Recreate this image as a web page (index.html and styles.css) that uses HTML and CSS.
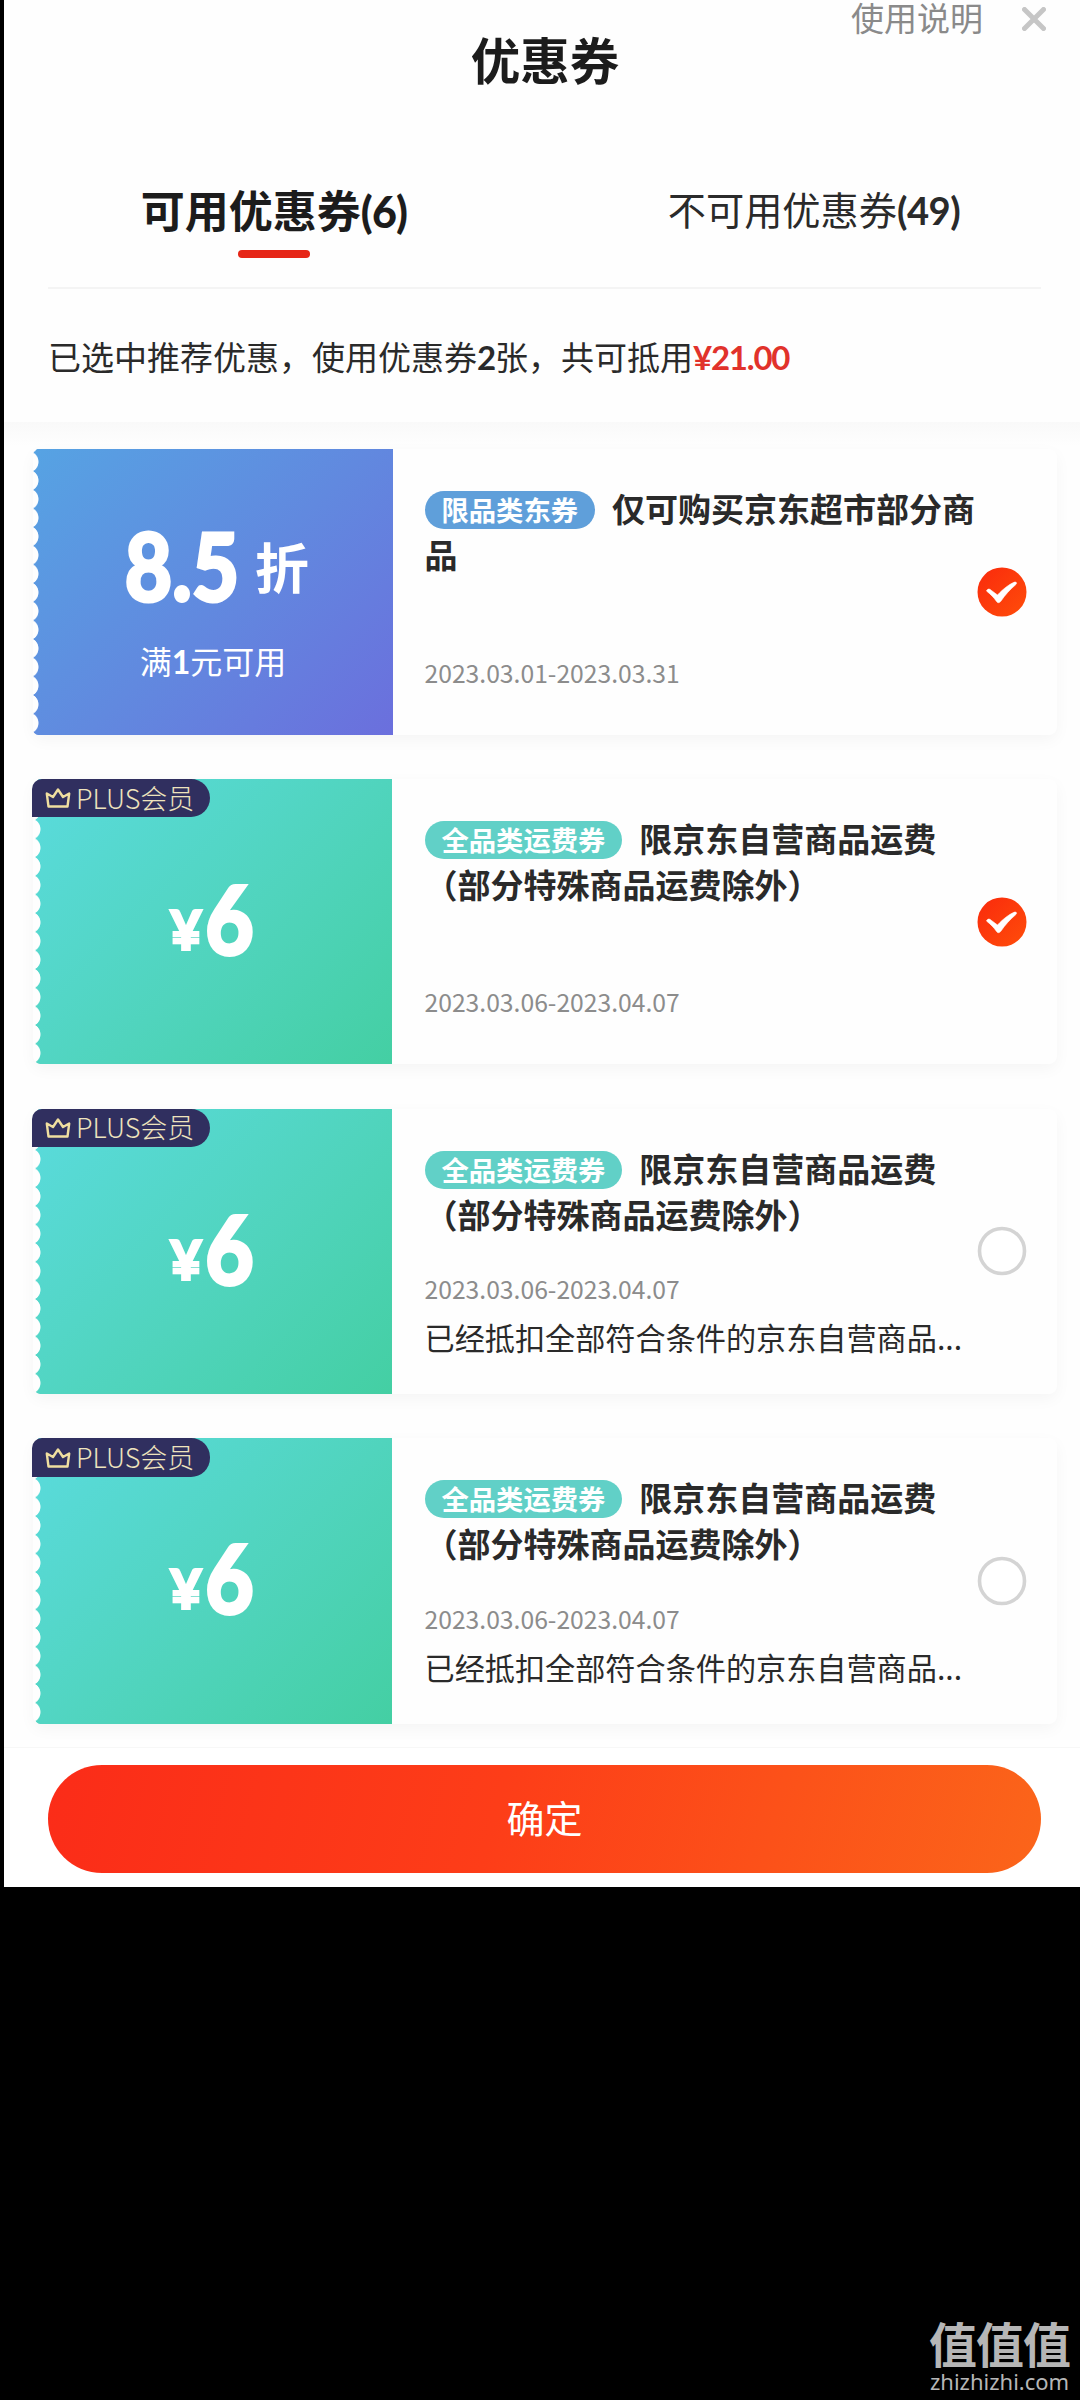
FILE: index.html
```html
<!DOCTYPE html>
<html lang="zh-CN">
<head>
<meta charset="utf-8">
<title>优惠券</title>
<link rel="stylesheet" href="styles.css">
</head>
<body>
<svg class="defs" width="0" height="0" aria-hidden="true">
  <defs>
    <linearGradient id="red" x1="0" y1="0" x2="1" y2="1"><stop offset="0" stop-color="#fa2a0c"/><stop offset="1" stop-color="#ff4d0a"/></linearGradient>
    <symbol id="check" viewBox="0 0 50 50"><circle cx="25" cy="25" r="24.5" fill="url(#red)"/><path d="M9.5 24c1-2.300 3-2.400 4.600-.8L20.500 28C26 22 32 17.500 37 15.300c2.800-.8 3.300 1.200 1.600 2.500C33 22.500 28 28 23.800 34.300c-1.500 1.800-3 1.800-4.300.1-2.500-3.800-5.500-6.700-10-10.400z" fill="#fff" stroke="#fff" stroke-width=".6"/></symbol>
    <symbol id="ring" viewBox="0 0 50 50"><circle cx="25" cy="25" r="22.500" fill="#fff" stroke="#d4d4d4" stroke-width="3.600"/></symbol>
    <symbol id="crown" viewBox="0 0 26 22"><path d="M1.800 6.500L8 10l5-7.500L18 10l6.200-3.500L22.500 19.500h-19z" fill="none" stroke="#f0dfa0" stroke-width="2.400" stroke-linejoin="round"/></symbol>
  </defs>
</svg>
<main class="sheet">
  <header>
    <div class="topbar">
      <span>使用说明</span>
      <svg width="24" height="24" viewBox="0 0 24 24"><path d="M2.500 2.500l19 19M21.500 2.500l-19 19" stroke="#c6c6c6" stroke-width="5" stroke-linecap="round"/></svg>
    </div>
    <h1 class="title">优惠券</h1>
    <nav class="tabs">
      <div class="tab active"><span>可用优惠券<b class="num">(6)</b></span></div>
      <div class="tab other"><span>不可用优惠券<b class="num">(49)</b></span></div>
    </nav>
    <p class="summary">已选中推荐优惠，使用优惠券<b class="num">2</b>张，共可抵用<b class="num sum">¥21.00</b></p>
  </header>
  <section class="list">
    <article class="coupon blue">
      <div class="value">
        <div class="amount"><span class="big discount">8.5</span><span class="zhe">折</span></div>
        <div class="cond">满<b class="num">1</b>元可用</div>
      </div>
      <div class="info">
        <h2 class="name"><span class="tag">限品类东券</span>仅可购买京东超市部分商品</h2>
        <p class="date">2023.03.01-2023.03.31</p>
      </div>
      <svg class="pick"><use href="#check"/></svg>
    </article>
    <article class="coupon green">
      <div class="value">
        <div class="plus"><svg width="26" height="22"><use href="#crown"/></svg><span>PLUS会员</span></div>
        <div class="amount"><span class="yen">¥</span><span class="big">6</span></div>
      </div>
      <div class="info">
        <h2 class="name"><span class="tag">全品类运费券</span>限京东自营商品运费<br>（部分特殊商品运费除外）</h2>
        <p class="date">2023.03.06-2023.04.07</p>
      </div>
      <svg class="pick"><use href="#check"/></svg>
    </article>
    <article class="coupon green">
      <div class="value">
        <div class="plus"><svg width="26" height="22"><use href="#crown"/></svg><span>PLUS会员</span></div>
        <div class="amount"><span class="yen">¥</span><span class="big">6</span></div>
      </div>
      <div class="info noted">
        <h2 class="name"><span class="tag">全品类运费券</span>限京东自营商品运费<br>（部分特殊商品运费除外）</h2>
        <p class="date">2023.03.06-2023.04.07</p>
        <p class="note">已经抵扣全部符合条件的京东自营商品...</p>
      </div>
      <svg class="pick"><use href="#ring"/></svg>
    </article>
    <article class="coupon green">
      <div class="value">
        <div class="plus"><svg width="26" height="22"><use href="#crown"/></svg><span>PLUS会员</span></div>
        <div class="amount"><span class="yen">¥</span><span class="big">6</span></div>
      </div>
      <div class="info noted">
        <h2 class="name"><span class="tag">全品类运费券</span>限京东自营商品运费<br>（部分特殊商品运费除外）</h2>
        <p class="date">2023.03.06-2023.04.07</p>
        <p class="note">已经抵扣全部符合条件的京东自营商品...</p>
      </div>
      <svg class="pick"><use href="#ring"/></svg>
    </article>
  </section>
  <footer class="footer"><button class="confirm">确定</button></footer>
</main>
<aside class="mark"><div class="mark-cn">值值值</div><div class="mark-url">zhizhizhi.com</div></aside>
</body>
</html>
```
FILE: styles.css
```css
* { box-sizing: border-box; }
body {
  margin: 0;
  height: 2400px;
  padding-left: 4px;
  display: flex;
  flex-direction: column;
  background: #000;
  color: #2a2a2a;
  font-family: "Noto Sans CJK SC", sans-serif;
  overflow: hidden;
}
h1, h2, p { margin: 0; }
.defs { position: absolute; }
.num { font-family: Lato, "Noto Sans CJK SC", sans-serif; font-weight: 700; }

.sheet { height: 1887px; background: #fefefe; flex: none; }
.topbar {
  display: flex;
  justify-content: flex-end;
  align-items: center;
  gap: 39px;
  height: 34px;
  padding-right: 34px;
  font-size: 33px;
  line-height: 34px;
  color: #8a8a8a;
}
.topbar svg { position: relative; top: 2px; }
.title {
  font-size: 49.5px;
  line-height: 50px;
  text-align: center;
  font-weight: 700;
  padding-left: 6px;
  color: #1c1c1c;
}
.tabs {
  display: grid;
  grid-template-columns: 540px 536px;
  margin: 100px 0 0;
  height: 103px;
  line-height: 50px;
}
.tab { display: flex; flex-direction: column; align-items: center; white-space: nowrap; }
.active { font-size: 44px; font-weight: 700; color: #1c1c1c; }
.active .num { font-size: 43px; font-weight: 900; letter-spacing: -.8px; }
.active::after { content: ""; width: 72px; height: 8px; margin-top: 13px; border-radius: 4px; background: #e62617; }
.other { font-size: 38.2px; line-height: 49px; padding-left: 4px; }
.other .num { letter-spacing: -.5px; }
.summary {
  margin: 0 39px 0 44px;
  border-top: 2px solid #f4f4f4;
  font-size: 33px;
  line-height: 134px;
  height: 135px;
  white-space: nowrap;
}
.summary .num { letter-spacing: -1.2px; }
.summary .sum { color: #e1322b; }

.list {
  height: 1325px;
  padding: 27px 23px 0 29px;
  display: flex;
  flex-direction: column;
  gap: 44.300px;
  background: linear-gradient(#f9f9f9, #fefefe 24px);
}
.coupon {
  display: flex;
  align-items: center;
  flex: none;
  height: 285.500px;
  padding-right: 30px;
  border-radius: 8px;
  background: #fefefe;
  box-shadow: 0 5px 16px rgba(0, 0, 0, .04);
}
.value {
  position: relative;
  align-self: stretch;
  width: 360px;
  color: #fff;
  text-align: center;
  flex: none;
}
.value::before {
  content: "";
  position: absolute;
  inset: 0;
  border-radius: 5px 0 0 5px;
  background:
    radial-gradient(circle at -5.200px 50%, #fefefe 10.300px, transparent 11.100px) 0 3.500px / 8px 18.670px repeat-y,
    var(--fill);
}
.blue .value::before { --fill: linear-gradient(135deg, #56a3e3, #6189df 52%, #6b6fdd); }
.green .value::before { left: 1.500px; right: 1px; --fill: linear-gradient(135deg, #5adbdd, #50d4bd 55%, #44cfa3); }
.amount {
  position: relative;
  display: flex;
  justify-content: center;
}
.blue .amount { padding: 71px 0 0; gap: 8px; }
.green .amount { padding: 94px 0 0 1px; }
.big { font: 900 95px/90px Lato, sans-serif; -webkit-text-stroke: 3px #fff; font-kerning: none; transform: scaleX(.88); }
.discount { font-size: 93px; }
.zhe { font-size: 54px; line-height: 60px; font-weight: 700; padding-top: 16px; }
.yen { font: 900 55px/60px Lato, sans-serif; padding-top: 26px; -webkit-text-stroke: 2px #fff; }
.cond { position: relative; font-size: 32px; line-height: 44px; margin-top: 28px; }
.plus {
  position: absolute;
  left: -1px;
  top: 0;
  z-index: 1;
  width: 178px;
  height: 38.500px;
  padding-left: 13px;
  display: flex;
  align-items: center;
  gap: 5px;
  border-radius: 10px 19px 19px 0;
  background: #302f5f;
  color: #eee3bd;
  font-size: 27px;
  line-height: 35px;
  font-weight: 300;
  white-space: nowrap;
}
.plus span { padding-bottom: 2px; }
.info {
  align-self: stretch;
  flex: 1;
  min-width: 0;
  display: flex;
  flex-direction: column;
  padding: 36px 0 43px 31.500px;
}
.noted { padding-bottom: 37px; }
.name { font-size: 33px; line-height: 46px; font-weight: 700; width: 552px; }
.tag {
  display: inline-block;
  height: 38px;
  margin-right: 17px;
  padding: 0 17px;
  border-radius: 19px;
  background: #5f9fda;
  color: #fff;
  font-size: 27.300px;
  line-height: 37px;
  vertical-align: 1px;
}
.green .tag { background: #61d0c7; }
.date { margin-top: auto; font-size: 24.700px; line-height: 40px; color: #8c8c8c; }
.note { font-size: 30.150px; line-height: 40px; margin-top: 9px; white-space: nowrap; }
.pick { width: 50px; height: 50px; flex: none; }

.footer { height: 140px; padding: 17px 39px 0 44px; background: #fff; border-top: 1px solid #f7f7f7; }
.confirm {
  display: block;
  width: 100%;
  height: 108px;
  border: 0;
  border-radius: 54px;
  background: linear-gradient(105deg, #fb2c18, #fd3d18 45%, #fb651a);
  color: #fff;
  font: 400 38px/103px "Noto Sans CJK SC", sans-serif;
  padding: 0 0 5px;
}
.mark { margin: auto 9px 4px auto; color: #b6b6b6; width: 142px; }
.mark-cn { font-size: 48px; line-height: 48px; font-weight: 700; letter-spacing: -1px; white-space: nowrap; }
.mark-url { font: 400 22px/30px "Noto Sans", sans-serif; padding-left: 1px; }
```
